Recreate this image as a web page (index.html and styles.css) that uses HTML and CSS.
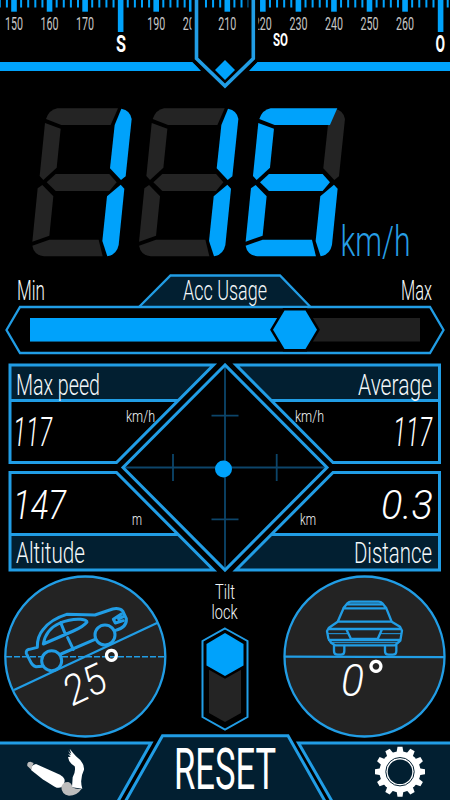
FILE: index.html
```html
<!DOCTYPE html>
<html lang="en">
<head>
<meta charset="utf-8">
<title>Speedometer</title>
<link rel="stylesheet" href="styles.css">
</head>
<body>
<main class="dash">
  <svg class="compass" viewBox="0 0 450 96">
    <g class="solid" id="ticks"></g>
    <g class="scale" id="scale"></g>
    <text class="cardinal" x="116" y="52" font-size="24" textLength="10" lengthAdjust="spacingAndGlyphs">S</text>
    <text class="cardinal" x="273" y="46" font-size="17.500" textLength="15" lengthAdjust="spacingAndGlyphs">SO</text>
    <text class="cardinal" x="435.500" y="52" font-size="24" textLength="9.500" lengthAdjust="spacingAndGlyphs">O</text>
    <path class="solid" d="M0 62H193L201 71H0ZM450 62H257L249 71H450Z"/>
    <path class="gap" d="M196.500 -6V59L225 86L253.300 59V-6"/>
    <path class="line thick" d="M196.500 -6V58.500L225 86L253.300 58.500V-6"/>
    <path class="solid" d="M225 60L235 70L225 80L215 70Z"/>
  </svg>

  <svg class="speed" viewBox="0 96 450 174">
    <defs>
      <path id="a" d="M78 72Q88 44 112 40H294L272 90H124Z"/>
      <path id="b" d="M304 41Q331 46 335 72L317 244L303 255L270 220L284 90Z"/>
      <path id="c" d="M302 269L313 281L296 450Q290 479 262 484L247 438L261 304Z"/>
      <path id="d" d="M37 452L88 434H236L248 484H72Q42 480 37 452Z"/>
      <path id="e" d="M67 270L100 304L88 422L37 440L53 280Z"/>
      <path id="f" d="M75 84L122 101L110 218L70 255L59 243Z"/>
      <path id="g" d="M80 262L107 237H268L290 262L268 288H107Z"/>
    </defs>
    <g transform="translate(20 95) scale(.33333)">
      <g class="unlit"><use href="#a"/><use href="#d"/><use href="#e"/><use href="#f"/><use href="#g"/></g>
      <g class="lit"><use href="#b"/><use href="#c"/></g>
    </g>
    <g transform="translate(126.700 95) scale(.33333)">
      <g class="unlit"><use href="#a"/><use href="#d"/><use href="#e"/><use href="#f"/><use href="#g"/></g>
      <g class="lit"><use href="#b"/><use href="#c"/></g>
    </g>
    <g transform="translate(233.300 95) scale(.33333)">
      <g class="unlit"><use href="#b"/></g>
      <g class="lit"><path d="M78 72Q88 44 112 40H312L290 90H124Z"/><use href="#c"/><use href="#d"/><use href="#e"/><use href="#f"/><use href="#g"/></g>
    </g>
    <text class="unit-main" x="340.500" y="256" font-size="42" textLength="70" lengthAdjust="spacingAndGlyphs">km/h</text>
  </svg>

  <svg class="usage" viewBox="0 270 450 88">
    <path class="line panel" d="M139 307L170.500 275.500H280L310.500 307"/>
    <path class="line" d="M6.500 330L20 307H430L443.500 330L430 353H20Z"/>
    <rect class="track" x="30" y="318" width="390" height="23.500"/>
    <rect class="solid" x="30" y="318" width="250" height="23.500"/>
    <path class="thumb" d="M273 329.700L284.500 310.500H305.500L317 329.700L305.500 349H284.500Z"/>
    <text x="17" y="300" font-size="27" textLength="28" lengthAdjust="spacingAndGlyphs">Min</text>
    <text x="183" y="300" font-size="27" textLength="84" lengthAdjust="spacingAndGlyphs">Acc Usage</text>
    <text x="401" y="300" font-size="27" textLength="31" lengthAdjust="spacingAndGlyphs">Max</text>
  </svg>

  <svg class="stats" viewBox="0 358 450 216">
    <path class="panel" d="M10 365H214L178 400.500H10ZM440 365H235L271 400.500H440ZM10 534.500H178L214 570H10ZM440 534.500H271L235 570H440Z"/>
    <g class="line wide">
      <path d="M10 365H213.500L116.500 462.500H10ZM10 400.500H178"/>
      <path d="M439.500 365H236L333 462.500H439.500ZM439.500 400.500H272"/>
      <path d="M10 472.500H116.500L213.500 570H10ZM10 534.500H178"/>
      <path d="M439.500 472.500H333L236 570H439.500ZM439.500 534.500H272"/>
    </g>
    <path class="cross" d="M125 467.500H325M225 366V569M211.500 415.700H238.500M211.500 519.300H238.500M173 454V481M276.700 454V481"/>
    <path class="line wide" d="M225 365L123 467.500L225 570L327 467.500Z"/>
    <circle class="solid" cx="223.500" cy="469" r="8.500"/>
    <text x="16" y="395" font-size="29" textLength="84" lengthAdjust="spacingAndGlyphs">Max peed</text>
    <text x="358" y="395" font-size="29" textLength="74" lengthAdjust="spacingAndGlyphs">Average</text>
    <text x="16" y="563" font-size="29" textLength="69" lengthAdjust="spacingAndGlyphs">Altitude</text>
    <text x="354" y="563" font-size="29" textLength="78" lengthAdjust="spacingAndGlyphs">Distance</text>
    <text x="126" y="421.500" font-size="16.500" textLength="29" lengthAdjust="spacingAndGlyphs">km/h</text>
    <text x="295" y="421.500" font-size="16.500" textLength="29" lengthAdjust="spacingAndGlyphs">km/h</text>
    <text x="132" y="524.500" font-size="16.500" textLength="10" lengthAdjust="spacingAndGlyphs">m</text>
    <text x="300" y="524.500" font-size="16.500" textLength="16" lengthAdjust="spacingAndGlyphs">km</text>
    <text class="value" x="13" y="445.500" font-size="41" textLength="39" lengthAdjust="spacingAndGlyphs">117</text>
    <text class="value" x="393" y="445.500" font-size="41" textLength="39" lengthAdjust="spacingAndGlyphs">117</text>
    <text class="value" x="13" y="518.500" font-size="41" textLength="53" lengthAdjust="spacingAndGlyphs">147</text>
    <text class="value" x="381" y="518.500" font-size="41" textLength="52" lengthAdjust="spacingAndGlyphs">0.3</text>
  </svg>

  <section class="tilt">
    <svg class="gauge" viewBox="0 574 180 166">
      <circle class="line dial" cx="85.300" cy="656.500" r="80"/>
      <path class="line dashed" d="M6 656.800H165"/>
      <path class="line" d="M14 690L157 623"/>
      <g class="car" transform="translate(0 570) scale(.33333)">
        <path d="M126 289L108 290Q97 288 90 272L79 250Q77 240 88 238L112 232Q111 200 130 178Q152 148 200 133L285 135L338 117Q358 113 368 123L379 146Q382 172 345 182M183 252L285 208"/>
        <path d="M130 222Q137 178 180 159Q212 146 242 148Q262 150 261 156Q250 170 220 183ZM182 158L195 190M203 203L220 238M364 132L340 148L346 159L370 152M356 147L370 140"/>
        <circle class="wheel" cx="155" cy="272" r="30"/>
        <circle class="wheel" cx="315" cy="195" r="30"/>
      </g>
      <text class="value upright" transform="translate(71 707) rotate(-25) skewX(-5)" font-size="42" textLength="42" lengthAdjust="spacingAndGlyphs">25</text>
      <text class="degree" x="101.500" y="687" font-size="53">°</text>
    </svg>
    <svg class="lock" viewBox="180 574 90 166">
      <text x="215" y="598.700" font-size="21" textLength="20" lengthAdjust="spacingAndGlyphs">Tilt</text>
      <text x="211.500" y="618.500" font-size="21" textLength="26" lengthAdjust="spacingAndGlyphs">lock</text>
      <path class="line fine" d="M225 628.500L247.500 641V717L225 729.500L202.500 717V641Z"/>
      <path class="unlit" d="M209 660H241V713L225 722L209 713Z"/>
      <path class="thumb" d="M225 633L243.500 644V665.500L225 676L206.500 665.500V644Z"/>
    </svg>
    <svg class="gauge" viewBox="270 574 180 166">
      <circle class="line dial" cx="364.500" cy="656.500" r="80"/>
      <path class="line" d="M285 656.600L444 657.200"/>
      <g class="car front" transform="translate(275 570) scale(.33333)">
        <path d="M205 115L218 99Q222 95 228 95H310Q318 95 322 100L334 115L350 155L375 170L381 182L376 212L360 226H180L168 218L160 205L156 183L162 173L188 155L207 112M205 115H332M216 103H324M188 155H350M160 177H378M162 210H376M215 180L228 207H308L320 180"/>
        <path class="thin" d="M160 191H218M317 191H378M168 218H370"/>
        <path d="M177 226V243Q177 254 188 254H198Q208 254 208 243V228M330 228V243Q330 254 341 254H353Q364 254 364 243V226"/>
      </g>
      <text class="value" x="341" y="696" font-size="44" textLength="23" lengthAdjust="spacingAndGlyphs">0</text>
      <text class="degree" x="366" y="698" font-size="53">°</text>
    </svg>
  </section>

  <svg class="actions" viewBox="0 733 450 67">
    <path class="line panel wide" d="M-5 743H151L117 803H-5Z"/>
    <path class="line panel wide" d="M455 743H298.500L333 803H455Z"/>
    <path class="line panel wide" d="M124.500 803L162.500 735.700H288L326 803Z"/>
    <text class="reset" x="174" y="788.700" font-size="57.500" textLength="102" lengthAdjust="spacingAndGlyphs">RESET</text>
    <g transform="translate(0 570) scale(.33333)">
      <path class="white" d="M93 600Q92 585 108 582L180 614Q200 625 192 642Q182 660 164 650L128 628Z"/>
      <path class="grey" d="M82 588Q80 575 91 575L101 579Q96 586 95 600Z"/>
      <path class="white" d="M204 541L214 552L209 536L220 550L228 559Q254 578 252 599Q238 627 247 656L216 652L218 622Q228 603 224 589Q206 578 204 561L212 560L204 552L213 556Z"/>
      <path class="grey" d="M184 651Q189 635 205 636Q215 639 217 652Q230 660 245 656Q231 677 207 677Q184 673 184 651Z"/>
    </g>
    <g class="gear" transform="translate(400 771.700)">
      <g id="teeth"></g>
      <circle class="white" r="20.500"/>
      <circle class="hub" r="12.300"/>
      <circle class="hub-ring" r="14.200"/>
    </g>
  </svg>
</main>
<script src="dash.js"></script>
</body>
</html>
```
FILE: styles.css
```css
body {
  margin: 0;
  background: #000;
}

.dash {
  display: flex;
  flex-direction: column;
  width: 450px;
  height: 800px;
  overflow: hidden;
  background: #000;
  font-family: Roboto, "Liberation Sans", sans-serif;
  font-weight: 300;
}

svg {
  display: block;
  flex: none;
}

.compass { height: 96px; }
.speed { height: 174px; }
.usage { height: 88px; }
.stats { height: 216px; }
.tilt { display: flex; height: 166px; }
.gauge { width: 180px; height: 166px; }
.lock { width: 90px; height: 166px; }
.actions { height: 67px; margin-top: -7px; }

text { fill: #f4f8fa; }
.scale text { fill: #c6c6c6; font-size: 19px; font-weight: 400; }
.cardinal { fill: #fff; font-weight: 700; }
.unit-main { fill: #279ee4; }
.value { fill: #fff; font-style: italic; font-weight: 300; }
.upright { font-style: normal; }
.degree { fill: #fff; font-weight: 400; }
.reset { fill: #fff; font-weight: 400; }

.solid, .lit { fill: #00a2fb; }
.unlit { fill: #242424; }
.track { fill: #202020; }
.thumb { fill: #00a2fb; stroke: #000; stroke-width: 5; paint-order: stroke; }

.line { fill: none; stroke: #219de5; stroke-width: 2.3; }
.panel { fill: #021f31; }
.wide { stroke-width: 3; }
.thick { stroke-width: 3.6; }
.fine { stroke-width: 2; }
.gap { fill: none; stroke: #000; stroke-width: 10; }
.cross { fill: none; stroke: #0c456a; stroke-width: 1.8; }
.dial { fill: #232323; }
.dashed { stroke-width: 1.6; stroke-dasharray: 6 2; }

.car {
  fill: none;
  stroke: #219de5;
  stroke-width: 9;
  stroke-linejoin: round;
  stroke-linecap: round;
}
.wheel { fill: #232323; }
.front { stroke-width: 7; }
.thin { stroke-width: 3; }

.white { fill: #fff; }
.grey { fill: #bdbdbd; }
.hub { fill: #021f31; }
.hub-ring { fill: none; stroke: #021f31; stroke-width: 1; }
```
FILE: dash.js
```js
const NS = "http://www.w3.org/2000/svg";

function add(parent, tag, attrs, label) {
  const el = document.createElementNS(NS, tag);
  for (const key in attrs) el.setAttribute(key, attrs[key]);
  if (label) el.textContent = label;
  parent.appendChild(el);
}

// Compass strip: one minor tick every 2 degrees, one major every 10.
const STEP = 35.55;
const ticks = document.getElementById("ticks");
const scale = document.getElementById("scale");
for (let i = -2; i <= 62; i++) {
  const x = 14 + (i * STEP) / 5;
  const major = i % 5 === 0;
  const heading = 150 + i * 2;
  const cardinal = heading === 180 || heading === 270;
  const w = major ? 5.6 : 2;
  const h = cardinal ? 32 : major ? 11.7 : 7.5;
  add(ticks, "rect", { x: x - w / 2, y: 0, width: w, height: h });
  if (major && !cardinal) {
    add(scale, "text", { x: x - 9, y: 30, textLength: 18, lengthAdjust: "spacingAndGlyphs" }, String(heading));
  }
}

const teeth = document.getElementById("teeth");
for (let i = 0; i < 12; i++) {
  add(teeth, "path", { class: "white", d: "M-3.500 -19L-2.500 -25H2.500L3.500 -19Z", transform: `rotate(${i * 30})` });
}
```
